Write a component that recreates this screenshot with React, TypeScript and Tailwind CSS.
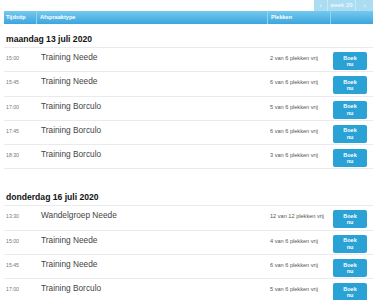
import React from 'react';

type Slot = { time: string; title: string; free: string };

const DAYS: { label: string; slots: Slot[] }[] = [
  {
    label: 'maandag 13 juli 2020',
    slots: [
      { time: '15:00', title: 'Training Neede', free: '2 van 6 plekken vrij' },
      { time: '15:45', title: 'Training Neede', free: '6 van 6 plekken vrij' },
      { time: '17:00', title: 'Training Borculo', free: '5 van 6 plekken vrij' },
      { time: '17:45', title: 'Training Borculo', free: '6 van 6 plekken vrij' },
      { time: '18:30', title: 'Training Borculo', free: '3 van 6 plekken vrij' },
    ],
  },
  {
    label: 'donderdag 16 juli 2020',
    slots: [
      { time: '13:30', title: 'Wandelgroep Neede', free: '12 van 12 plekken vrij' },
      { time: '15:00', title: 'Training Neede', free: '4 van 6 plekken vrij' },
      { time: '15:45', title: 'Training Neede', free: '6 van 6 plekken vrij' },
      { time: '17:00', title: 'Training Borculo', free: '5 van 6 plekken vrij' },
    ],
  },
];

const COLS = 'grid grid-cols-[33px_231px_63px_42px]';

export default function App() {
  return (
    <div className="w-[375px] h-[300px] overflow-hidden bg-white pl-[4px] pr-[2px] font-['Liberation_Sans',Arial,sans-serif]">
      {/* week nav */}
      <div className="flex justify-end h-[11px]">
        <div className="flex bg-[#abdcf2] text-white text-[6px] leading-[11px]">
          <div className="w-[14px] text-center border-r border-[#c6e8f7]">&lsaquo;</div>
          <div className="w-[28px] text-center border-r border-[#c6e8f7]">week 29</div>
          <div className="w-[17px] text-center">&rsaquo;</div>
        </div>
      </div>

      {/* table header */}
      <div className={`${COLS} h-[13px] bg-gradient-to-b from-[#74c9ef] to-[#3aa6dc] text-white text-[5.6px] font-bold leading-[13px]`}>
        <div className="pl-[2px] border-r border-[#8fd3f2]">Tijdstip</div>
        <div className="pl-[3px] border-r border-[#8fd3f2]">Afspraaktype</div>
        <div className="pl-[3px] border-r border-[#8fd3f2]">Plekken</div>
        <div />
      </div>

      {DAYS.map((day, i) => (
        <section key={day.label} className={i > 0 ? 'mt-[13px]' : ''}>
          <h2 className="pt-[10px] pb-[3px] pl-[2px] text-[8.6px] leading-[10px] font-bold text-[#111]">
            {day.label}
          </h2>
          <div className="border-t border-[#ebebeb]">
            {day.slots.map((s) => (
              <div key={s.time + s.title} className={`${COLS} h-[24.3px] border-b border-[#ebebeb] pt-[4px]`}>
                <div className="pl-[2px] pt-[2px] text-[5.2px] leading-[8px] text-[#777]">{s.time}</div>
                <div className="pl-[4px] text-[8.3px] leading-[10px] text-[#444]">{s.title}</div>
                <div className="pl-[2px] pt-[2px] text-[5.6px] leading-[8px] text-[#555]">{s.free}</div>
                <div className="pl-[2px]">
                  <button className="w-[34px] h-[18px] rounded-[2px] bg-[#2ba2d6] text-white text-[5.5px] font-bold leading-[6.5px] flex flex-col items-center justify-center">
                    <span>Boek</span>
                    <span>nu</span>
                  </button>
                </div>
              </div>
            ))}
          </div>
        </section>
      ))}
    </div>
  );
}
